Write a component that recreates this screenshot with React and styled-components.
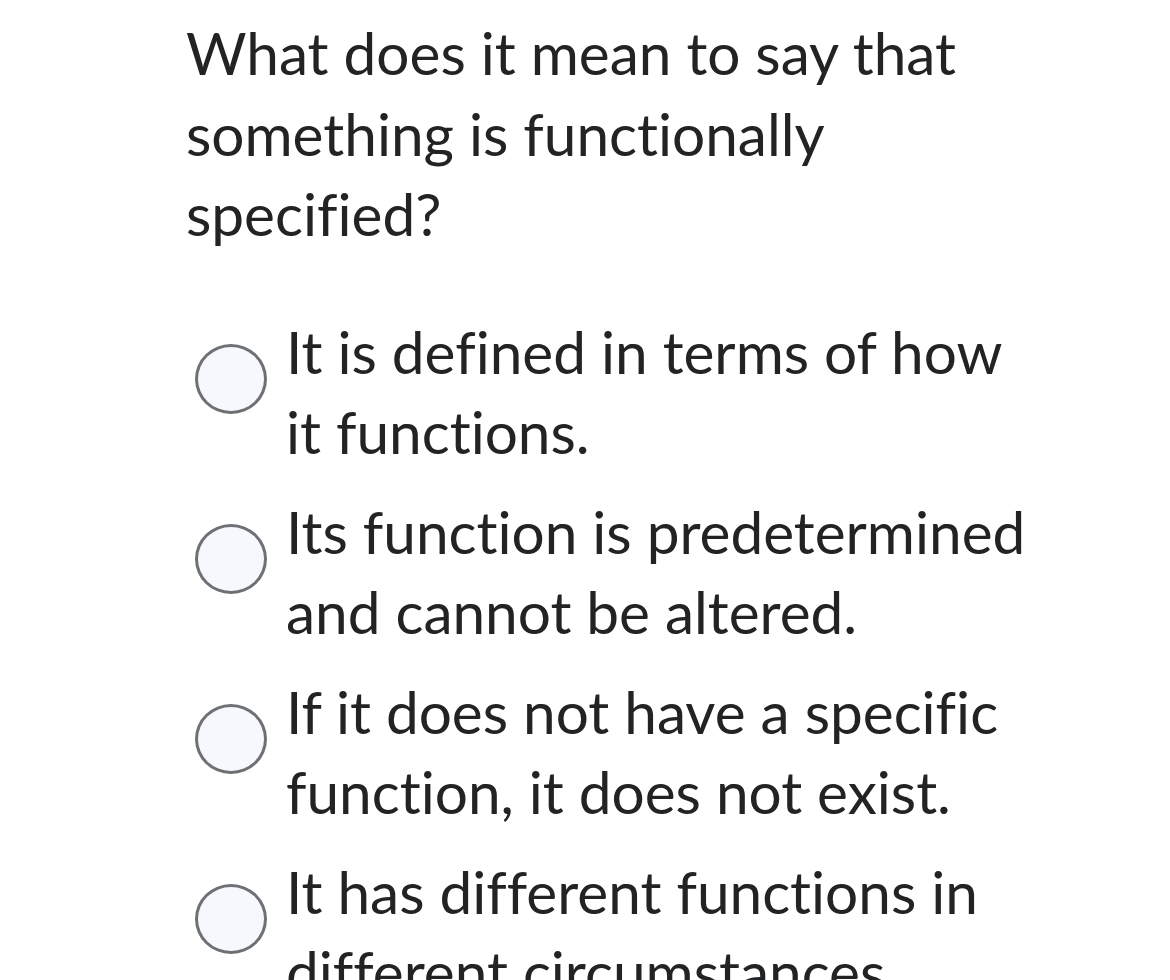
import React from 'react';
import styled, { createGlobalStyle } from 'styled-components';

const GlobalStyle = createGlobalStyle`
  body {
    margin: 0;
    background: #ffffff;
    font-family: Lato, "Open Sans", sans-serif;
    color: #222325;
    font-variant-ligatures: none;
  }
`;

const Page = styled.div`
  padding: 12px 0 0 186px;
  width: 1170px;
  height: 980px;
  box-sizing: border-box;
  overflow: hidden;
`;

const Question = styled.h1`
  margin: 0;
  width: 820px;
  font-size: 58.5px;
  font-weight: 400;
  line-height: 80.5px;
`;

const Options = styled.div`
  display: flex;
  flex-direction: column;
  gap: 19px;
  margin-top: 57px;
`;

const Option = styled.label`
  display: flex;
  align-items: flex-start;
  gap: 19px;
  padding-left: 9px;
  cursor: pointer;
`;

const Radio = styled.span`
  flex: none;
  width: 72px;
  height: 70px;
  margin-top: 33px;
  border-radius: 50%;
  border: 3px solid #6e7174;
  background: #f7f8fd;
  box-sizing: border-box;
`;

const OptionText = styled.span`
  font-size: 58.5px;
  line-height: 80.5px;
  width: 748px;
`;

const answers = [
  'It is defined in terms of how it functions.',
  'Its function is predetermined and cannot be altered.',
  'If it does not have a specific function, it does not exist.',
  'It has different functions in different circumstances.',
];

export default function App() {
  return (
    <>
      <GlobalStyle />
      <Page>
        <Question>What does it mean to say that something is functionally specified?</Question>
        <Options>
          {answers.map((a) => (
            <Option key={a}>
              <Radio />
              <OptionText>{a}</OptionText>
            </Option>
          ))}
        </Options>
      </Page>
    </>
  );
}
